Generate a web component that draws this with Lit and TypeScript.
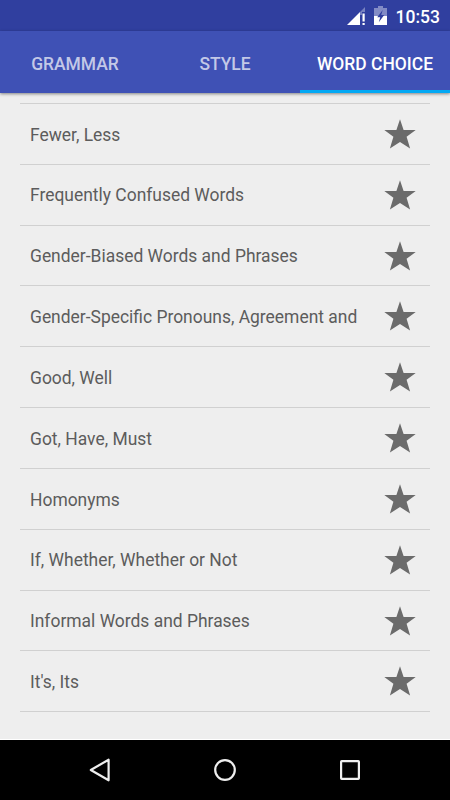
import { LitElement, html, css } from "lit";
import { customElement, state } from "lit/decorators.js";
import { classMap } from "lit/directives/class-map.js";

const TABS = ["GRAMMAR", "STYLE", "WORD CHOICE"];

const TOPICS = [
  "Fewer, Less",
  "Frequently Confused Words",
  "Gender-Biased Words and Phrases",
  "Gender-Specific Pronouns, Agreement and",
  "Good, Well",
  "Got, Have, Must",
  "Homonyms",
  "If, Whether, Whether or Not",
  "Informal Words and Phrases",
  "It's, Its",
];

@customElement("app-root")
export class AppRoot extends LitElement {
  @state() private active = 2;

  static styles = css`
    :host {
      display: flex;
      flex-direction: column;
      width: 450px;
      height: 800px;
      overflow: hidden;
      background: #eeeeee;
      font-family: Roboto, sans-serif;
    }
    svg {
      display: block;
      flex: none;
    }
    .status {
      display: flex;
      flex: none;
      align-items: center;
      justify-content: flex-end;
      height: 31px;
      padding-right: 10px;
      box-sizing: border-box;
      background: #303f9f;
      color: #fff;
    }
    .battery {
      margin-left: 9px;
    }
    .clock {
      margin-left: 9px;
      padding-top: 3px;
      font-size: 17.5px;
      line-height: 28px;
      font-weight: 500;
    }
    .tabs {
      display: flex;
      flex: none;
      height: 62px;
      background: #3f51b5;
      box-shadow: 0 1px 3px rgba(0, 0, 0, 0.45);
    }
    .tab {
      flex: 1 1 0;
      box-sizing: border-box;
      height: 62px;
      padding-top: 5px;
      border-bottom: 3px solid transparent;
      text-align: center;
      white-space: nowrap;
      font-size: 17.45px;
      line-height: 57px;
      font-weight: 500;
      color: rgba(255, 255, 255, 0.7);
    }
    .tab.active {
      color: #fff;
      border-bottom-color: #03a9f4;
    }
    .list {
      flex: 1;
      margin: 10px 20px 0;
      border-top: 1px solid #d0d0d0;
    }
    .row {
      display: flex;
      align-items: center;
      justify-content: space-between;
      box-sizing: border-box;
      height: 60.83px;
      padding: 0 14px 0 10px;
      border-bottom: 1px solid #d0d0d0;
      font-size: 17.45px;
      color: #5c5c5c;
      white-space: nowrap;
    }
    .topic {
      padding-top: 1.4px;
    }
    .nav {
      display: flex;
      flex: none;
      align-items: center;
      justify-content: center;
      gap: 95px;
      height: 61px;
      box-sizing: border-box;
      border-top: 1px solid #fff;
      background: #000;
    }
  `;

  render() {
    return html`
      <div class="status">
        <svg width="18" height="19" viewBox="0 0 18 19">
          <path d="M18 1v5h-3v3h-2v-3z" fill="#fff" fill-opacity=".35" />
          <path d="M0 19L13 6v13z" fill="#fff" />
          <path d="M15.5 7.5h2.2v8h-2.2zM15.5 17h2.2v2h-2.2z" fill="#fff" />
        </svg>
        <svg class="battery" width="13" height="19" viewBox="0 0 13 19">
          <path d="M4 0h5v2h4v8H0V2h4z" fill="#fff" fill-opacity=".4" />
          <path d="M0 10h13v9H0z" fill="#fff" />
          <path d="M8.7 4L3.2 11.3h3L4.8 16.3L10.2 9H7.2z" fill="#303f9f" />
        </svg>
        <span class="clock">10:53</span>
      </div>
      <div class="tabs">
        ${TABS.map(
          (label, i) => html`<div
            class=${classMap({ tab: true, active: i === this.active })}
            @click=${() => (this.active = i)}
          >${label}</div>`
        )}
      </div>
      <div class="list">
        ${TOPICS.map(
          (topic) => html`<div class="row">
            <span class="topic">${topic}</span>
            <svg width="32" height="30" viewBox="0 0 32 30">
              <path
                d="M16 .3L19.6 11H31.7L22.6 17.8L26.1 29.5L16 23L5.9 29.5L9.4 17.8L.3 11H12.4Z"
                fill="#6b6b6b"
              />
            </svg>
          </div>`
        )}
      </div>
      <div class="nav">
        <svg width="30" height="30" viewBox="0 0 30 30">
          <path
            d="M5.8 15L23.6 4.7V25.3Z"
            fill="none" stroke="#eee" stroke-width="2.2" stroke-linejoin="round"
          />
        </svg>
        <svg width="30" height="30" viewBox="0 0 30 30">
          <circle cx="15" cy="15" r="9.8" fill="none" stroke="#eee" stroke-width="2.2" />
        </svg>
        <svg width="30" height="30" viewBox="0 0 30 30">
          <rect
            x="6.1" y="6.1" width="17.8" height="17.8" rx=".6"
            fill="none" stroke="#eee" stroke-width="2.2"
          />
        </svg>
      </div>
    `;
  }
}
